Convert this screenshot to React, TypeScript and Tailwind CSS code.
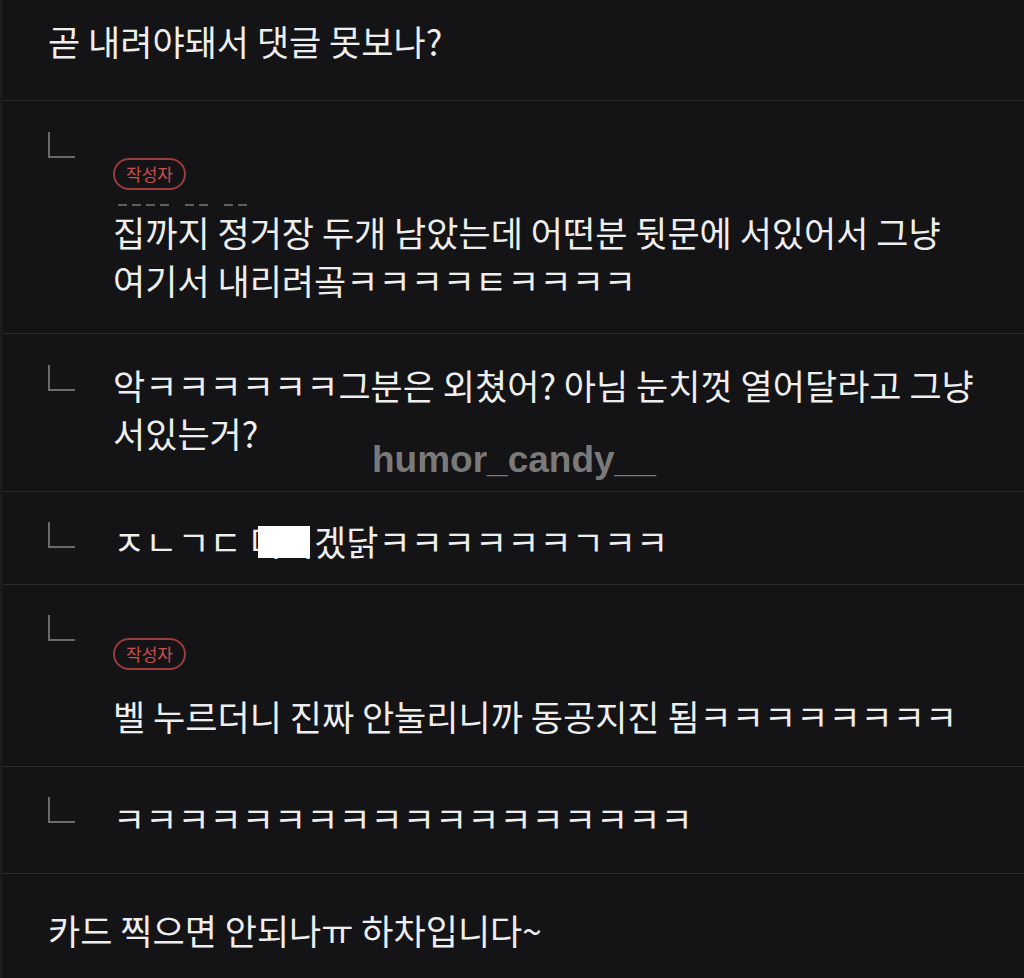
import React from 'react';

const textCls =
  "font-['Noto_Sans_CJK_KR','Noto_Sans',sans-serif] text-[35px] leading-[48px] text-[#eeeeee] whitespace-nowrap";

const ReplyCorner: React.FC<{ offset?: string }> = ({ offset = 'mt-0' }) => (
  <div className={`w-[65px] shrink-0 ${offset}`}>
    <div className="h-[26px] w-[27px] border-l-2 border-b-2 border-[#6a6a6c]" />
  </div>
);

const AuthorBadge: React.FC = () => (
  <div className="inline-flex h-[32px] items-center rounded-full border-2 border-[#9a3b3c] px-[11px] font-['Noto_Sans_CJK_KR',sans-serif] text-[17px] text-[#c84f4f]">
    작성자
  </div>
);

// the date is hidden under the text, only its top edge shows as dashes
const dateMarks = [10, 10, 10, 10, 0, 10, 10, 0, 10, 10];

const HiddenDate: React.FC = () => (
  <div className="flex h-[18px] items-end gap-[5px] pb-[2px] pl-[5px]">
    {dateMarks.map((w, i) =>
      w ? (
        <div key={i} className="h-[2px] w-[9px] bg-[#5e5e60]" />
      ) : (
        <div key={i} className="w-[6px]" />
      )
    )}
  </div>
);

export default function App() {
  return (
    <div className="relative min-h-[978px] w-[1024px] overflow-hidden border-l-[3px] border-[#1c1c1e] bg-[#141416]">
      {/* top-level comment */}
      <div className="border-b border-[#2c2c2e] pb-[35px] pl-[45px] pt-[17px]">
        <div className={textCls}>곧 내려야돼서 댓글 못보나?</div>
      </div>

      {/* author reply */}
      <div className="flex border-b border-[#2c2c2e] pb-[29px] pl-[45px] pt-[31px]">
        <ReplyCorner />
        <div className="pt-[26px]">
          <AuthorBadge />
          <HiddenDate />
          <div className={textCls}>
            집까지 정거장 두개 남았는데 어떤분 뒷문에 서있어서 그냥
            <br />
            여기서 내리려곸ㅋㅋㅋㅋㅌㅋㅋㅋㅋ
          </div>
        </div>
      </div>

      <div className="flex border-b border-[#2c2c2e] pb-[34px] pl-[45px] pt-[27px]">
        <ReplyCorner offset="mt-[4px]" />
        <div className={textCls}>
          악ㅋㅋㅋㅋㅋㅋ그분은 외쳤어? 아님 눈치껏 열어달라고 그냥
          <br />
          서있는거?
        </div>
      </div>

      <div className="flex border-b border-[#2c2c2e] pb-[19px] pl-[45px] pt-[25px]">
        <ReplyCorner offset="mt-[5px]" />
        <div className={textCls}>
          ㅈㄴㄱㄷ{' '}
          <span className="relative">
            미치
            <span className="absolute bottom-[8px] left-[8px] right-[4px] top-[11px] bg-white" />
          </span>
          겠닭ㅋㅋㅋㅋㅋㅋㄱㅋㅋ
        </div>
      </div>

      <div className="flex border-b border-[#2c2c2e] pb-[26px] pl-[45px] pt-[30px]">
        <ReplyCorner />
        <div className="pt-[23px]">
          <AuthorBadge />
          <div className={`mt-[22px] ${textCls}`}>벨 누르더니 진짜 안눌리니까 동공지진 됨ㅋㅋㅋㅋㅋㅋㅋㅋ</div>
        </div>
      </div>

      <div className="flex border-b border-[#2c2c2e] pb-[31px] pl-[45px] pt-[27px]">
        <ReplyCorner offset="mt-[3px]" />
        <div className={textCls}>ㅋㅋㅋㅋㅋㅋㅋㅋㅋㅋㅋㅋㅋㅋㅋㅋㅋㅋ</div>
      </div>

      <div className="pb-[24px] pl-[45px] pt-[32px]">
        <div className={textCls}>카드 찍으면 안되나ㅠ 하차입니다~</div>
      </div>

      {/* watermark */}
      <div className="pointer-events-none absolute left-[369px] top-[441px] font-['Liberation_Sans',sans-serif] text-[37px] font-bold leading-[37px] text-[#7a7a7a]">
        humor_candy__
      </div>
    </div>
  );
}
